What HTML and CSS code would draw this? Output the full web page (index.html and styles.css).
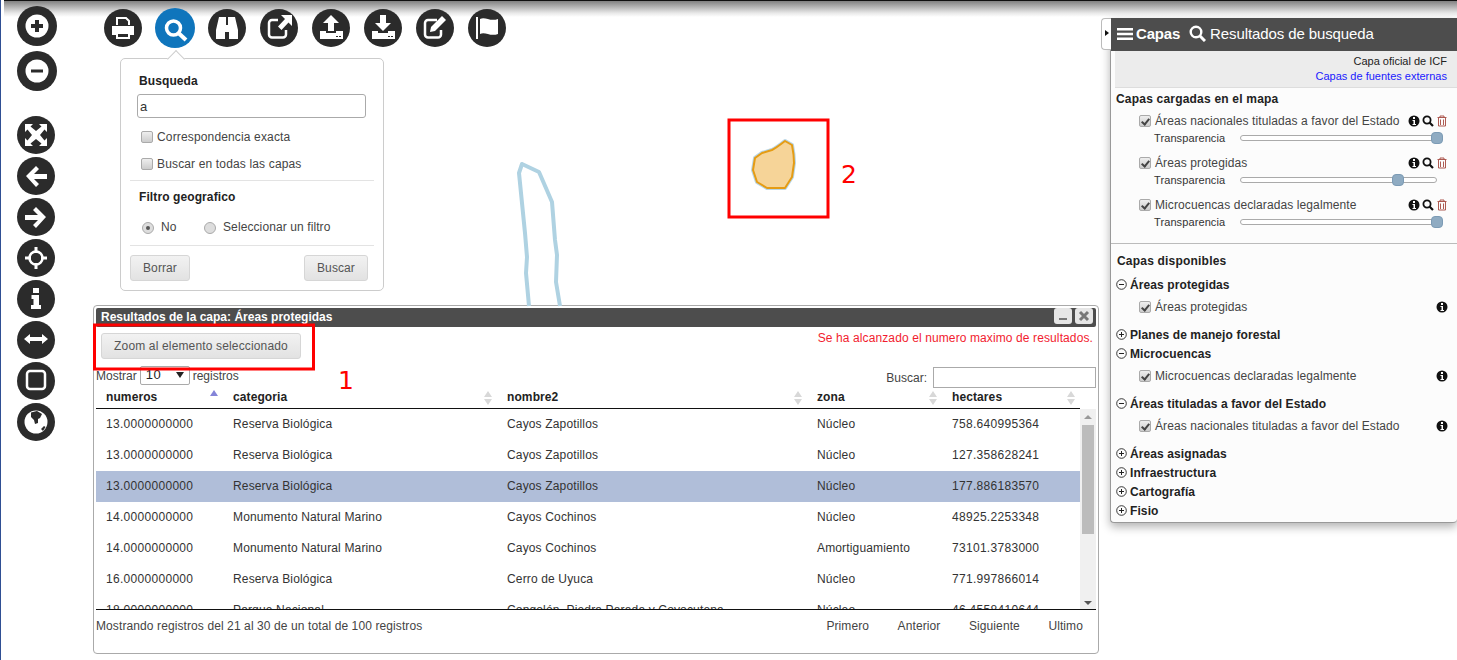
FILE: index.html
```html
<!DOCTYPE html>
<html lang="es">
<head>
<meta charset="utf-8">
<title>Capas</title>
<link rel="stylesheet" href="styles.css">
</head>
<body>
<div class="map">
  <div class="topshade"></div>

  <svg class="mapshapes" width="1457" height="660" viewBox="0 0 1457 660">
    <path class="river" d="M529 306L526 273L527 257L525 233L519 173L522 164L539 172L552 202L555 240L557 255L556 282L560 306"/>
    <path class="blob-halo" d="M785 141L792 145Q794 155 794 163L792 177L785 188L767 188L757 182L753 170L755 158L762 153L772 150Q776 148 785 141Z"/>
    <path class="blob" d="M785 141L792 145Q794 155 794 163L792 177L785 188L767 188L757 182L753 170L755 158L762 153L772 150Q776 148 785 141Z"/>
    <rect class="redbox" x="729" y="120" width="99" height="97"/>
    <rect class="redbox" x="94.500" y="325" width="219" height="44"/>
  </svg>
  <span class="note note-two">2</span>
  <span class="note note-one">1</span>

  <nav class="lefttools">
    <div class="toolgroup zoomgroup">
      <svg class="tool big" viewBox="0 0 40 40"><circle class="d" cx="20" cy="20" r="20"/><circle class="w" cx="20" cy="20" r="11.500"/><path class="d" d="M18 14h4v4h4v4h-4v4h-4v-4h-4v-4h4z"/></svg>
      <svg class="tool big" viewBox="0 0 40 40"><circle class="d" cx="20" cy="20" r="20"/><circle class="w" cx="20" cy="20" r="11.500"/><rect class="d" x="14" y="18.500" width="12" height="3"/></svg>
    </div>
    <div class="toolgroup">
      <svg class="tool" viewBox="0 0 38 38"><circle class="d" cx="19" cy="19" r="19"/><path class="w" d="M8 8h8l-2.500 2.500L19 15l5.500-4.500L22 8h8v8l-2.500-2.500L23 19l4.500 5.500L30 22v8h-8l2.500-2.500L19 23l-5.500 4.500L16 30H8v-8l2.500 2.500L15 19l-4.500-5.500L8 16z"/></svg>
      <svg class="tool" viewBox="0 0 38 38"><circle class="d" cx="19" cy="19" r="19"/><path class="w" d="M9 19l10-10 3 3-5 5h13v5H17l5 5-3 3z"/></svg>
      <svg class="tool" viewBox="0 0 38 38"><circle class="d" cx="19" cy="19" r="19"/><path class="w" d="M29 19L19 9l-3 3 5 5H8v5h13l-5 5 3 3z"/></svg>
      <svg class="tool" viewBox="0 0 38 38"><circle class="d" cx="19" cy="19" r="19"/><circle class="ring" cx="19" cy="19" r="6.500"/><path class="w" d="M17.500 8h3v6h-3zM17.500 24h3v6h-3zM8 17.500h6v3H8zM24 17.500h6v3h-6z"/></svg>
      <svg class="tool" viewBox="0 0 38 38"><circle class="d" cx="19" cy="19" r="19"/><path class="w" d="M16 8h6v5h-6zM14.500 15H22v10h2v4H14v-4h2.500v-6h-2z"/></svg>
      <svg class="tool" viewBox="0 0 38 38"><circle class="d" cx="19" cy="19" r="19"/><path class="w" d="M7 18l6-5v3h12v-3l6 5-6 5v-3H13v3z"/></svg>
      <svg class="tool" viewBox="0 0 38 38"><circle class="d" cx="19" cy="19" r="19"/><rect class="ring" x="10" y="9" width="18" height="18" rx="3"/></svg>
      <svg class="tool" viewBox="0 0 38 38"><circle class="d" cx="19" cy="19" r="19"/><circle class="w" cx="19" cy="19" r="11.500"/><path class="d" d="M14 9.500l6-1.500 5 3-2 4-2 1v4l-3 1-1-4-3-3zM24 26l3-3 1.500 1-2.500 4z"/></svg>
    </div>
  </nav>

  <nav class="toptools">
    <svg class="tool" viewBox="0 0 38 38"><circle class="d" cx="19" cy="19" r="19"/><path class="ring thin" d="M13 16V9h9l3 3v4"/><path class="w" d="M8 17h22v9h-4v-3H12v3H8z"/><rect class="ring thin" x="13" y="24" width="12" height="5"/></svg>
    <svg class="tool active" viewBox="0 0 40 40"><circle class="b" cx="20" cy="20" r="20"/><circle class="lens" cx="18.500" cy="20" r="7"/><path class="handle" d="M24 25.500L31 32"/></svg>
    <svg class="tool" viewBox="0 0 38 38"><circle class="d" cx="19" cy="19" r="19"/><path class="w" d="M11 8h7v8h2V8h7l3 13v9h-9v-7h-4v7H8v-9z"/></svg>
    <svg class="tool" viewBox="0 0 38 38"><circle class="d" cx="19" cy="19" r="19"/><path class="ring" d="M26 21v4.500a3 3 0 0 1-3 3H12a3 3 0 0 1-3-3V14a3 3 0 0 1 3-3h6"/><path class="w" d="M21 6h11v11l-3.500-3.500-7 7.500-3.500-3.500 7-7.500z"/></svg>
    <svg class="tool" viewBox="0 0 38 38"><circle class="d" cx="19" cy="19" r="19"/><path class="w" d="M19 6l8 8h-5v8h-6v-8h-5zM8 22h6v2h10v-2h7v8H8z"/><path class="d" d="M24 27h2v1h-2zM27 27h2v1h-2z"/></svg>
    <svg class="tool" viewBox="0 0 38 38"><circle class="d" cx="19" cy="19" r="19"/><path class="w" d="M16 6h6v8h5l-8 8-8-8h5zM8 22h6v2h10v-2h7v8H8z"/><path class="d" d="M24 27h2v1h-2zM27 27h2v1h-2z"/></svg>
    <svg class="tool" viewBox="0 0 38 38"><circle class="d" cx="19" cy="19" r="19"/><path class="ring" d="M25 21v4.500a3 3 0 0 1-3 3H12a3 3 0 0 1-3-3V14a3 3 0 0 1 3-3h9"/><path class="w" d="M26 7l4 4-11 11-5 1 1-5z"/></svg>
    <svg class="tool" viewBox="0 0 38 38"><circle class="d" cx="19" cy="19" r="19"/><path class="w" d="M8 8h2v22H8zM12 10c5-3 10 3 18 0v15c-8 3-13-3-18 0z"/></svg>
  </nav>

  <form class="searchbox">
    <h3 class="sb-title">Busqueda</h3>
    <input class="sb-input" type="text" value="a">
    <label class="sb-check"><span class="fake-check"></span>Correspondencia exacta</label>
    <label class="sb-check"><span class="fake-check"></span>Buscar en todas las capas</label>
    <hr class="sb-rule">
    <h3 class="sb-title">Filtro geografico</h3>
    <div class="sb-radios">
      <span class="fake-radio on"></span><span class="radio-no">No</span>
      <span class="fake-radio"></span><span>Seleccionar un filtro</span>
    </div>
    <hr class="sb-rule">
    <div class="sb-actions">
      <button class="btn btn-borrar" type="button">Borrar</button>
      <button class="btn btn-buscar" type="button">Buscar</button>
    </div>
  </form>

  <section class="results">
    <header class="res-title">
      <span>Resultados de la capa: Áreas protegidas</span>
      <span class="winbtns">
        <span class="winbtn"><svg viewBox="0 0 18 16" width="18" height="16"><rect x="5" y="10" width="8" height="2" fill="#777"/></svg></span>
        <span class="winbtn"><svg viewBox="0 0 18 16" width="18" height="16"><path d="M5 4l8 8M13 4l-8 8" stroke="#777" stroke-width="3"/></svg></span>
      </span>
    </header>
    <div class="res-actions">
      <button class="btn btn-zoom" type="button">Zoom al elemento seleccionado</button>
      <span class="res-warning">Se ha alcanzado el numero maximo de resultados.</span>
    </div>
    <div class="res-controls">
      <div class="res-length">Mostrar <span class="fake-select">10<i class="sel-arrow"></i></span> registros</div>
      <div class="res-filter">Buscar: <span class="fake-text"></span></div>
    </div>
    <div class="tablewrap">
      <table class="tbl tbl-head">
        <thead>
          <tr>
            <th class="c1">numeros<i class="sort asc"></i></th>
            <th class="c2">categoria<i class="sort"></i></th>
            <th class="c3">nombre2<i class="sort"></i></th>
            <th class="c4">zona<i class="sort"></i></th>
            <th class="c5">hectares<i class="sort"></i></th>
          </tr>
        </thead>
      </table>
      <div class="tbody-view">
        <table class="tbl">
          <tbody>
            <tr><td class="c1">13.0000000000</td><td class="c2">Reserva Biológica</td><td class="c3">Cayos Zapotillos</td><td class="c4">Núcleo</td><td class="c5">758.640995364</td></tr>
            <tr><td class="c1">13.0000000000</td><td class="c2">Reserva Biológica</td><td class="c3">Cayos Zapotillos</td><td class="c4">Núcleo</td><td class="c5">127.358628241</td></tr>
            <tr class="selected"><td class="c1">13.0000000000</td><td class="c2">Reserva Biológica</td><td class="c3">Cayos Zapotillos</td><td class="c4">Núcleo</td><td class="c5">177.886183570</td></tr>
            <tr><td class="c1">14.0000000000</td><td class="c2">Monumento Natural Marino</td><td class="c3">Cayos Cochinos</td><td class="c4">Núcleo</td><td class="c5">48925.2253348</td></tr>
            <tr><td class="c1">14.0000000000</td><td class="c2">Monumento Natural Marino</td><td class="c3">Cayos Cochinos</td><td class="c4">Amortiguamiento</td><td class="c5">73101.3783000</td></tr>
            <tr><td class="c1">16.0000000000</td><td class="c2">Reserva Biológica</td><td class="c3">Cerro de Uyuca</td><td class="c4">Núcleo</td><td class="c5">771.997866014</td></tr>
            <tr><td class="c1">18.0000000000</td><td class="c2">Parque Nacional</td><td class="c3">Congolón, Piedra Parada y Coyocutena</td><td class="c4">Núcleo</td><td class="c5">46.4558410644</td></tr>
          </tbody>
        </table>
        <div class="scrollbar">
          <i class="sb-up"></i>
          <div class="sb-thumb"></div>
          <i class="sb-down"></i>
        </div>
      </div>
    </div>
    <footer class="res-foot">
      <span>Mostrando registros del 21 al 30 de un total de 100 registros</span>
      <span class="pager"><a>Primero</a><a>Anterior</a><a>Siguiente</a><a>Ultimo</a></span>
    </footer>
  </section>

  <aside class="layers">
    <div class="handle-tab"><i class="tab-arrow"></i></div>
    <header class="lay-head">
      <svg class="hamb" viewBox="0 0 16 14" width="16" height="14"><path d="M0 1h16v2.400H0zM0 5.800h16v2.400H0zM0 10.600h16v2.400H0z" fill="#fff"/></svg>
      <b class="lay-tab">Capas</b>
      <svg class="mag" viewBox="0 0 17 17" width="17" height="17"><circle cx="7" cy="7" r="5.300" fill="none" stroke="#fff" stroke-width="2.400"/><path d="M11 11l5 5" stroke="#fff" stroke-width="3"/></svg>
      <span class="lay-tab2">Resultados de busqueda</span>
    </header>
    <div class="lay-body">
      <div class="legend">
        <div>Capa oficial de ICF</div>
        <div class="ext">Capas de fuentes externas</div>
      </div>
      <h4 class="lay-h first">Capas cargadas en el mapa</h4>

      <div class="loaded">
        <div class="layer-row"><span class="fake-check checked"></span><span class="lname">Áreas nacionales tituladas a favor del Estado</span><span class="acts"><svg class="ic"><use href="#i-info"/></svg><svg class="ic"><use href="#i-mag"/></svg><svg class="ic"><use href="#i-trash"/></svg></span></div>
        <div class="trans"><span>Transparencia</span><span class="slider"><i class="knob k100"></i></span></div>
        <div class="layer-row"><span class="fake-check checked"></span><span class="lname">Áreas protegidas</span><span class="acts"><svg class="ic"><use href="#i-info"/></svg><svg class="ic"><use href="#i-mag"/></svg><svg class="ic"><use href="#i-trash"/></svg></span></div>
        <div class="trans"><span>Transparencia</span><span class="slider"><i class="knob k80"></i></span></div>
        <div class="layer-row"><span class="fake-check checked"></span><span class="lname">Microcuencas declaradas legalmente</span><span class="acts"><svg class="ic"><use href="#i-info"/></svg><svg class="ic"><use href="#i-mag"/></svg><svg class="ic"><use href="#i-trash"/></svg></span></div>
        <div class="trans"><span>Transparencia</span><span class="slider"><i class="knob k100"></i></span></div>
      </div>

      <h4 class="lay-h second">Capas disponibles</h4>
      <div class="group"><svg class="pm"><use href="#i-minus"/></svg><b>Áreas protegidas</b></div>
      <div class="layer-row sub"><span class="fake-check checked"></span><span class="lname">Áreas protegidas</span><span class="acts"><svg class="ic"><use href="#i-info"/></svg></span></div>
      <div class="group"><svg class="pm"><use href="#i-plus"/></svg><b>Planes de manejo forestal</b></div>
      <div class="group"><svg class="pm"><use href="#i-minus"/></svg><b>Microcuencas</b></div>
      <div class="layer-row sub"><span class="fake-check checked"></span><span class="lname">Microcuencas declaradas legalmente</span><span class="acts"><svg class="ic"><use href="#i-info"/></svg></span></div>
      <div class="group"><svg class="pm"><use href="#i-minus"/></svg><b>Áreas tituladas a favor del Estado</b></div>
      <div class="layer-row sub"><span class="fake-check checked"></span><span class="lname">Áreas nacionales tituladas a favor del Estado</span><span class="acts"><svg class="ic"><use href="#i-info"/></svg></span></div>
      <div class="group"><svg class="pm"><use href="#i-plus"/></svg><b>Áreas asignadas</b></div>
      <div class="group"><svg class="pm"><use href="#i-plus"/></svg><b>Infraestructura</b></div>
      <div class="group"><svg class="pm"><use href="#i-plus"/></svg><b>Cartografía</b></div>
      <div class="group"><svg class="pm"><use href="#i-plus"/></svg><b>Fisio</b></div>
    </div>
  </aside>
</div>

<svg class="defs" width="0" height="0">
  <symbol id="i-info" viewBox="0 0 12 12"><circle cx="6" cy="6" r="5.500" fill="#111"/><path d="M5 2h2v2H5zM4.500 5H7v4h1v1H4.500V9h1V6h-1z" fill="#fff"/></symbol>
  <symbol id="i-mag" viewBox="0 0 12 12"><circle cx="5" cy="5" r="3.600" fill="none" stroke="#111" stroke-width="1.800"/><path d="M7.500 7.500l3.500 3.500" stroke="#111" stroke-width="2.200"/></symbol>
  <symbol id="i-trash" viewBox="0 0 12 12"><path d="M1.500 2.500h9M4 2.500V1h4v1.500M2.500 3v8h7V3M4.500 4.500V10M7.500 4.500V10" fill="none" stroke="#a5483e" stroke-width=".9"/></symbol>
  <symbol id="i-minus" viewBox="0 0 11 11"><circle cx="5.500" cy="5.500" r="4.800" fill="none" stroke="#222" stroke-width=".9"/><path d="M3 5.500h5" stroke="#222"/></symbol>
  <symbol id="i-plus" viewBox="0 0 11 11"><circle cx="5.500" cy="5.500" r="4.800" fill="none" stroke="#222" stroke-width=".9"/><path d="M3 5.500h5M5.500 3v5" stroke="#222"/></symbol>
</svg>
</body>
</html>
```

FILE: styles.css
```css
* { box-sizing: border-box; }
html, body { margin: 0; padding: 0; height: 660px; overflow: hidden; }
body { background: #fff; font: 12px "Liberation Sans", Arial, sans-serif; color: #333; }
.defs { position: absolute; }
.map { position: relative; width: 1457px; height: 660px; overflow: hidden; border-left: 1px solid #2f4f94; }

.topshade { position: absolute; left: 3px; top: 0; right: 0; height: 17px; border-top: 1px solid #111;
  background: linear-gradient(#828282, #b8b8b8 40%, #e8e8e8 75%, #fff); }
.mapshapes { position: absolute; left: -1px; top: 0; z-index: 4; pointer-events: none; }
.river { fill: none; stroke: #afd2e2; stroke-width: 4; stroke-linejoin: round; }
.blob-halo { fill: none; stroke: #b9d6e6; stroke-width: 4; stroke-linejoin: round; }
.blob { fill: #f6d498; stroke: #e59c14; stroke-width: 2; stroke-linejoin: round; }
.redbox { fill: none; stroke: #f00; stroke-width: 3; }
.note { position: absolute; color: #f00; font: 25px/30px "DejaVu Sans", sans-serif; z-index: 5; }
.note-two { left: 840px; top: 160px; }
.note-one { left: 337px; top: 366px; }

.tool { display: block; width: 38px; height: 38px; }
.tool.big { width: 40px; height: 40px; }
.tool.active { width: 40px; height: 40px; }
.d { fill: #2b2b2b; }
.w { fill: #fff; }
.b { fill: #0f75bc; }
.ring { fill: none; stroke: #fff; stroke-width: 2.500; }
.ring.thin { stroke-width: 2; }
.lens { fill: none; stroke: #fff; stroke-width: 3.500; }
.handle { stroke: #fff; stroke-width: 4; }

.lefttools { position: absolute; left: 16px; top: 6px; display: flex; flex-direction: column; gap: 25px; }
.toolgroup { display: flex; flex-direction: column; gap: 3px; }
.zoomgroup { gap: 5px; }
.toptools { position: absolute; left: 103px; top: 8px; display: flex; align-items: center; gap: 14px; }
.toptools .active { margin: 0 -1px; }

.searchbox { position: absolute; left: 119px; top: 58px; width: 264px; height: 233px; background: #fff;
  border: 1px solid #ccc; border-radius: 5px; padding: 0 9px; }
.searchbox::before { content: ""; position: absolute; left: 48px; top: -7px; width: 13px; height: 13px; background: #fff;
  border-left: 1px solid #ccc; border-top: 1px solid #ccc; transform: rotate(45deg) scale(.9); }
.sb-title { margin: 0 0 0 9px; font-size: 12px; line-height: 14px; font-weight: bold; color: #222; letter-spacing: .1px; }
.searchbox > .sb-title:first-child { margin-top: 15px; }
.sb-input { display: block; width: 229px; height: 24px; margin: 6px 0 0 7px; border: 1px solid #aaa; border-radius: 3px;
  font: 13px "Liberation Sans", sans-serif; padding: 0 2px; color: #333; }
.sb-check { display: flex; align-items: center; height: 27px; margin-left: 11px; color: #444; letter-spacing: .15px; }
.sb-input + .sb-check { margin-top: 5px; }
.fake-check { display: inline-block; width: 12px; height: 12px; margin-right: 4px; border: 1px solid #aaa; border-radius: 2px;
  background: linear-gradient(#eee, #ccc); position: relative; flex: none; }
.fake-check.checked::after { content: ""; position: absolute; left: 3px; top: 1px; width: 3px; height: 6px; border: solid #444;
  border-width: 0 2px 2px 0; transform: rotate(40deg); }
.sb-rule { margin: 3px 0 0; border: 0; border-top: 1px solid #e3e3e3; }
.sb-rule + .sb-title { margin-top: 9px; }
.sb-radios { display: flex; align-items: center; margin: 15px 0 0 12px; height: 16px; color: #444; letter-spacing: .1px; }
.fake-radio { width: 12px; height: 12px; border-radius: 50%; border: 1px solid #aaa; background: #ddd; margin-right: 7px; margin-top: 2px; position: relative; }
.fake-radio.on::after { content: ""; position: absolute; left: 3px; top: 3px; width: 4px; height: 4px; border-radius: 50%; background: #555; }
.radio-no { width: 43px; }
.sb-radios + .sb-rule { margin-top: 10px; }
.sb-actions { display: flex; justify-content: space-between; margin: 9px 6px 0 0; }
.btn { height: 26px; border: 1px solid #d6d6d6; border-radius: 3px; background: linear-gradient(#f2f2f2, #e2e2e2);
  font: 12px "Liberation Sans", sans-serif; color: #555; padding: 0; letter-spacing: .1px; }
.btn-borrar { width: 60px; }
.btn-buscar { width: 64px; }

.results { position: absolute; left: 92px; top: 305px; width: 1006px; height: 349px; background: #fff;
  border: 1px solid #aaa; border-radius: 4px; padding: 2px; }
.res-title { height: 19px; background: #4d4d4d; color: #fff; font-weight: bold; padding-left: 5px; border-radius: 2px;
  display: flex; justify-content: space-between; align-items: flex-start; line-height: 18px; }
.winbtns { display: flex; gap: 3px; margin-right: 3px; }
.winbtn { width: 18px; height: 16px; background: #e6e6e6; border-radius: 3px; display: block; }
.winbtn svg { display: block; }
.res-actions { display: flex; justify-content: space-between; align-items: flex-start; height: 39px; padding-left: 5px; }
.btn-zoom { width: 200px; height: 26px; margin-top: 6px; letter-spacing: .15px; }
.res-warning { color: #f21c2f; margin: 4px 3px 0 0; letter-spacing: .11px; }
.res-controls { display: flex; justify-content: space-between; align-items: flex-start; height: 22px; color: #444; }
.res-length { display: flex; align-items: center; gap: 3px; }
.fake-select { position: relative; width: 50px; height: 19px; border: 1px solid #aaa; border-radius: 2px; padding-left: 5px; font-size: 13px; line-height: 16px; color: #222; letter-spacing: .6px; }
.sel-arrow { position: absolute; right: 5px; top: 5px; border: 4px solid transparent; border-top: 6px solid #222; border-bottom: 0; }
.res-filter { display: flex; align-items: center; gap: 6px; margin-top: 1px; }
.fake-text { display: block; width: 163px; height: 21px; border: 1px solid #aaa; }

.tbl { width: 984px; border-collapse: collapse; table-layout: fixed; color: #333; }
.tbl th, .tbl td { padding: 0 0 0 10px; text-align: left; white-space: nowrap; letter-spacing: .15px; }
.tbl td.c1, .tbl td.c5 { letter-spacing: .3px; }
.tbl th { height: 20px; font-weight: bold; color: #222; position: relative; border-bottom: 1px solid #111; padding-bottom: 1px; letter-spacing: .1px; }
.tbl td { height: 31px; }
.tbl-head { border-bottom: 1px solid #111; }
.c1 { width: 127px; }
.c2 { width: 274px; }
.c3 { width: 310px; }
.c4 { width: 135px; }
.c5 { width: 138px; }
.selected { background: #b0bed9; }
.sort { position: absolute; right: 5px; top: 3px; width: 8px; height: 14px; }
.sort::before, .sort::after { content: ""; position: absolute; left: 0; border: 4px solid transparent; }
.sort::before { top: 0; border-top: 0; border-bottom: 6px solid #d8d8d8; }
.sort::after { top: 8px; border-bottom: 0; border-top: 6px solid #d8d8d8; }
.sort.asc { top: 2px; }
.sort.asc::before { border-bottom-color: #8484d8; }
.sort.asc::after { display: none; }
.tbody-view { position: relative; height: 201px; overflow: hidden; border-bottom: 1px solid #111; width: 1000px; }
.scrollbar { position: absolute; right: 0; top: 0; width: 16px; height: 200px; background: #f0f0f0; }
.sb-up, .sb-down { position: absolute; left: 4px; border: 4px solid transparent; }
.sb-up { top: 6px; border-top: 0; border-bottom: 4px solid #999; }
.sb-down { bottom: 4px; border-bottom: 0; border-top: 4px solid #555; }
.sb-thumb { position: absolute; left: 2px; top: 16px; width: 12px; height: 109px; background: #bcbcbc; }
.res-foot { display: flex; justify-content: space-between; padding-top: 9px; color: #444; letter-spacing: .1px; }
.pager { display: flex; gap: 28.500px; margin-right: 13px; }

.layers { position: absolute; left: 1109px; top: 18px; width: 347px; height: 505px; background: #fcfcfc;
  border-left: 1px solid #999; border-bottom: 1px solid #999; border-radius: 0 0 4px 4px;
  box-shadow: 0 4px 10px rgba(0,0,0,.3); }
.handle-tab { position: absolute; left: -10px; top: 0; width: 10px; height: 32px; background: #fff; border: 1px solid #bbb; border-right: 0; border-radius: 4px 0 0 4px; }
.tab-arrow { position: absolute; left: 3px; top: 11px; border: 3px solid transparent; border-left: 4px solid #111; border-right: 0; }
.lay-head { display: flex; align-items: center; height: 33px; background: #4d4d4d; color: #fff; padding: 0 0 2px 6px; }
.lay-tab { margin-left: 3px; font-size: 15px; letter-spacing: -.2px; }
.mag { margin-left: 9px; }
.lay-tab2 { margin-left: 4px; font-size: 15px; letter-spacing: -.1px; }
.legend { margin-left: 4px; height: 37px; background: #ececec; border-bottom: 1px solid #ddd; text-align: right; padding: 3px 10px 0 0; font-size: 11px; line-height: 15px; color: #222; }
.legend .ext { color: #1a1aff; }
.lay-h { margin: 0; font-size: 12px; line-height: 14px; font-weight: bold; color: #222; letter-spacing: .2px; }
.lay-h.first { margin: 4px 0 0 5px; }
.lay-h.second { margin: 10px 0 0 6px; }
.loaded { border-bottom: 1px solid #bbb; padding-bottom: 12px; }
.layer-row { display: flex; align-items: center; height: 16px; padding-left: 28px; color: #444; letter-spacing: .1px; }
.loaded .layer-row { margin-top: 7px; }
.loaded .trans + .layer-row { margin-top: 8px; }
.layer-row .fake-check { margin-right: 4px; }
.lname { flex: 1; }
.acts { display: flex; gap: 2px; margin-right: 9px; align-items: center; }
.ic { width: 12px; height: 12px; display: block; }
.trans { display: flex; align-items: center; height: 18px; padding-left: 43px; font-size: 11px; color: #333; letter-spacing: .1px; }
.slider { position: relative; display: block; margin-left: 20px; width: 197px; height: 6px; border: 1px solid #aaa; border-radius: 3px; background: #fff; }
.trans > span:first-child { width: 66px; }
.knob { position: absolute; top: -4px; width: 12px; height: 12px; border-radius: 4px; background: #8fabc2; border: 1px solid #7c9bb5; }
.k100 { left: 190px; }
.k80 { left: 151px; }
.group { display: flex; align-items: center; height: 19px; padding-left: 5px; font-size: 12px; color: #222; letter-spacing: .1px; }
.pm { width: 11px; height: 11px; margin-right: 3px; flex: none; }
.lay-h.second + .group { margin-top: 7px; }
.layer-row.sub { margin-top: 5px; height: 16px; }
.layer-row.sub + .group { margin-top: 10px; }
```
